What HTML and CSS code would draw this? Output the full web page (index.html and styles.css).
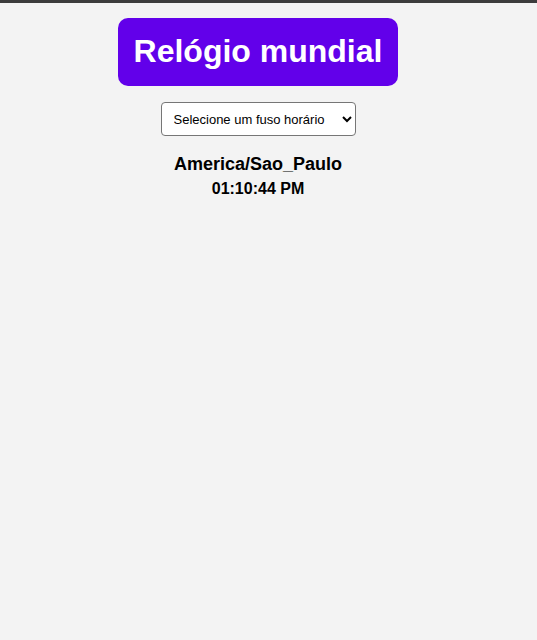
FILE: index.html
```html
<!DOCTYPE html>
<html lang="pt">
<head>
<meta charset="utf-8">
<title>Relógio mundial</title>
<link rel="stylesheet" href="styles.css">
</head>
<body>
<div class="topbar"></div>
<main class="app">
  <h1 class="title">Relógio mundial</h1>
  <select class="zone">
    <option>Selecione um fuso horário</option>
  </select>
  <div class="clock">
    <h2 class="zone-name">America/Sao_Paulo</h2>
    <p class="time">01:10:44 PM</p>
  </div>
</main>
</body>
</html>
```
FILE: styles.css
```css
html, body { margin: 0; padding: 0; }
body {
  background: #f3f3f3;
  font-family: "Liberation Sans", Arial, sans-serif;
  color: #000;
}
.topbar { height: 3px; background: #3c3c3c; }
.app {
  width: 500px;
  margin-left: 8px;
  display: flex;
  flex-direction: column;
  align-items: center;
}
.title {
  margin: 15px 0 0;
  background: #6200ea;
  color: #fff;
  font-size: 32px;
  font-weight: bold;
  line-height: 37px;
  padding: 15px 16px 16px;
  border-radius: 10px;
}
.zone {
  margin-top: 16px;
  width: 195px;
  height: 34px;
  padding: 0 4px 0 8px;
  font-family: "Liberation Sans", Arial, sans-serif;
  font-size: 13px;
  border: 1px solid #767676;
  border-radius: 4px;
  background: #fff;
  color: #000;
}
.clock { margin-top: 17px; text-align: center; }
.zone-name { margin: 0; font-size: 18px; line-height: 22px; }
.time { margin: 4px 0 0; font-size: 16px; font-weight: bold; line-height: 20px; }
```
